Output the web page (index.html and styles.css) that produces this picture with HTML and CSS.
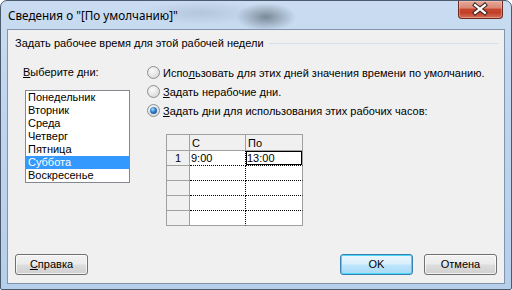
FILE: index.html
```html
<!DOCTYPE html>
<html lang="ru">
<head>
<meta charset="utf-8">
<title>Сведения</title>
<link rel="stylesheet" href="styles.css">
</head>
<body>
<div class="window">
  <div class="titlebar">
    <span class="title">Сведения о "[По умолчанию]"</span>
    <div class="close">
      <svg width="45" height="18" viewBox="0 0 45 18">
        <path d="M17.5 5 L27.5 13 M27.5 5 L17.5 13" stroke="#3a2220" stroke-width="4.4" stroke-linecap="square"/>
        <path d="M17.5 5 L27.5 13 M27.5 5 L17.5 13" stroke="#ffffff" stroke-width="2.4" stroke-linecap="square"/>
      </svg>
    </div>
  </div>
  <div class="client">
    <div class="group-head">
      <span>Задать рабочее время для этой рабочей недели</span>
      <span class="rule"></span>
    </div>
    <div class="main">
      <div class="days">
        <div class="label"><u>В</u>ыберите дни:</div>
        <ul class="list">
          <li>Понедельник</li>
          <li>Вторник</li>
          <li>Среда</li>
          <li>Четверг</li>
          <li>Пятница</li>
          <li class="sel">Суббота</li>
          <li>Воскресенье</li>
        </ul>
      </div>
      <div class="opts">
        <div class="radio"><span class="circle"></span>Испо<u>л</u>ьзовать для этих дней значения времени по умолчанию.</div>
        <div class="radio"><span class="circle"></span><u>З</u>адать нерабочие дни.</div>
        <div class="radio"><span class="circle on"></span><u>З</u>адать дни для использования этих рабочих часов:</div>
        <div class="grid">
          <div class="hc"></div><div class="hc">С</div><div class="hc last">По</div>
          <div class="rh">1</div><div class="dc">9:00</div><div class="dc last focus">13:00</div>
          <div class="rh"></div><div class="dc"></div><div class="dc last"></div>
          <div class="rh"></div><div class="dc"></div><div class="dc last"></div>
          <div class="rh"></div><div class="dc"></div><div class="dc last"></div>
          <div class="rh"></div><div class="dc bottom"></div><div class="dc last bottom"></div>
        </div>
      </div>
    </div>
    <div class="buttons">
      <div class="btn"><u>С</u>правка</div>
      <div class="spacer"></div>
      <div class="btn default">OK</div>
      <div class="btn">Отмена</div>
    </div>
  </div>
</div>
</body>
</html>
```
FILE: styles.css
```css
html, body {
  margin: 0;
  padding: 0;
  background: #ffffff;
}
.window {
  width: 512px;
  height: 290px;
  box-sizing: border-box;
  border: 1px solid #4b5a6c;
  border-radius: 7px 7px 2px 2px;
  padding: 0 6px 5px 6px;
  display: flex;
  flex-direction: column;
  background:
    radial-gradient(ellipse 30px 14px at 265px 16px, rgba(60,70,80,0.55), rgba(60,70,80,0) 100%),
    radial-gradient(ellipse 60px 12px at 200px 12px, rgba(140,160,180,0.35), rgba(140,160,180,0) 100%),
    linear-gradient(180deg, #c9dcf1 0%, #bfd5ee 40%, #b6cfea 100%);
  font-family: "Liberation Sans", Arial, sans-serif;
  font-size: 11px;
  color: #000;
}
.titlebar {
  height: 28px;
  display: flex;
  align-items: flex-start;
  flex: 0 0 auto;
}
.title {
  font-family: "Noto Sans", "Open Sans", sans-serif;
  font-size: 11.7px;
  padding: 6px 0 0 1px;
  line-height: 16px;
  color: #000;
}
.close {
  margin-left: auto;
  margin-right: 2px;
  width: 45px;
  height: 18px;
  box-sizing: border-box;
  border: 1px solid #6a2b24;
  border-top: none;
  border-radius: 0 0 4px 4px;
  background: linear-gradient(180deg, #e6aa9c 0%, #d98874 40%, #c5452c 50%, #c23f27 70%, #d6705a 100%);
  box-shadow: inset 0 0 0 1px rgba(255,220,210,0.35);
  display: flex;
}
.close svg {
  display: block;
  margin: -1px 0 0 -1px;
}
.client {
  flex: 1 1 auto;
  background: #f0f0f0;
  border: 1px solid #8294ac;
  display: flex;
  flex-direction: column;
  padding: 6px 6px 8px 7px;
}
.group-head {
  display: flex;
  align-items: center;
  height: 14px;
  line-height: 14px;
}
.group-head .rule {
  flex: 1 1 auto;
  height: 1px;
  background: #d5dfe5;
  margin-left: 5px;
  margin-top: 1px;
}
.main {
  flex: 1 1 auto;
  display: flex;
  margin-top: 13px;
}
.days {
  width: 132px;
  padding-left: 8px;
  box-sizing: border-box;
  flex: 0 0 auto;
}
.label {
  line-height: 19px;
  height: 19px;
}
u {
  text-decoration: underline;
  text-underline-offset: 1px;
}
.list {
  list-style: none;
  margin: 8px 0 0 2px;
  padding: 0;
  width: 105px;
  height: 93px;
  box-sizing: border-box;
  border: 1px solid #828790;
  background: #ffffff;
}
.list li {
  height: 13px;
  line-height: 13px;
  padding-left: 2px;
}
.list li.sel {
  background: #3399ff;
  color: #ffffff;
}
.opts {
  flex: 1 1 auto;
}
.radio {
  height: 19px;
  display: flex;
  align-items: center;
  white-space: nowrap;
}
.circle {
  width: 13px;
  height: 13px;
  box-sizing: border-box;
  border-radius: 50%;
  border: 1px solid #8d9092;
  background: radial-gradient(circle at 40% 35%, #fbfbfb 0%, #e6e6e6 50%, #cfcfcf 100%);
  margin-right: 3px;
  flex: 0 0 auto;
  position: relative;
}
.circle.on::after {
  content: "";
  position: absolute;
  left: 2px;
  top: 2px;
  width: 7px;
  height: 7px;
  border-radius: 50%;
  background: radial-gradient(circle at 40% 35%, #a8dcff 0%, #2f7bcf 45%, #103c78 100%);
}
.grid {
  margin: 14px 0 0 19px;
  display: grid;
  grid-template-columns: 23px 56px 57px;
  grid-template-rows: 16px repeat(5, 15px);
  width: max-content;
  border-left: 1px solid #a0a0a0;
  border-top: 1px solid #a0a0a0;
}
.hc, .rh {
  background: #f0f0f0;
  border-right: 1px solid #a0a0a0;
  border-bottom: 1px solid #a0a0a0;
  line-height: 16px;
}
.hc {
  padding-left: 2px;
}
.rh {
  text-align: right;
  padding-right: 8px;
  line-height: 15px;
}
.dc {
  background: #ffffff;
  border-right: 1px dotted #000;
  border-bottom: 1px dotted #000;
  line-height: 15px;
  padding-left: 1px;
}
.dc.last {
  border-right: 1px solid #a0a0a0;
}
.dc.bottom {
  border-bottom: 1px solid #a0a0a0;
}
.dc.focus {
  box-shadow: inset 0 0 0 1px #000;
  border-bottom: 1px dotted #000;
  position: relative;
}
.dc.focus::before {
  content: "";
  position: absolute;
  left: 0;
  top: 0;
  bottom: 0;
  border-left: 1px dotted #000;
}
.buttons {
  display: flex;
  flex: 0 0 auto;
  margin-right: 1px;
}
.spacer {
  flex: 1 1 auto;
}
.btn {
  width: 73px;
  height: 21px;
  box-sizing: border-box;
  border: 1px solid #707070;
  border-radius: 3px;
  background: linear-gradient(180deg, #f2f2f2 0%, #ebebeb 48%, #dddddd 52%, #cfcfcf 100%);
  box-shadow: inset 0 0 0 1px rgba(255,255,255,0.7);
  display: flex;
  align-items: center;
  justify-content: center;
  line-height: 19px;
}
.btn.default {
  border-color: #3c7fb1;
  background: linear-gradient(180deg, #eaf6fd 0%, #d9f0fc 48%, #bee6fd 52%, #a7d9f5 100%);
  box-shadow: inset 0 0 0 1px #48d6f6;
  margin-right: 11px;
}
```
